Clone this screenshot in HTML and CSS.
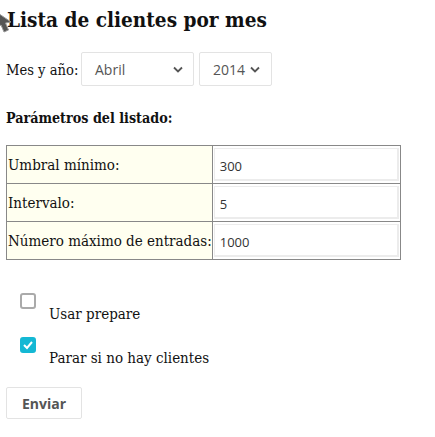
FILE: index.html
```html
<!DOCTYPE html>
<html lang="es">
<head>
<meta charset="utf-8">
<title>Lista de clientes por mes</title>
<link rel="stylesheet" href="styles.css">
</head>
<body>
<svg class="cursor" width="12" height="24" viewBox="0 0 12 24"><path d="M-8 0 L11 13 L5.5 14 L8.5 21 L4 23 L1 16 L-8 22 Z" fill="#555" stroke="#999" stroke-width="1"/></svg>
<h1 class="title">Lista de clientes por mes</h1>
<div class="period">
  <span class="period-label">Mes y año:</span>
  <div class="select month"><span>Abril</span><svg class="chev" width="10" height="7" viewBox="0 0 10 7"><path d="M1 1.5 L5 5.5 L9 1.5" fill="none" stroke="#555" stroke-width="1.8"/></svg></div>
  <div class="select year"><span>2014</span><svg class="chev" width="10" height="7" viewBox="0 0 10 7"><path d="M1 1.5 L5 5.5 L9 1.5" fill="none" stroke="#555" stroke-width="1.8"/></svg></div>
</div>
<h2 class="subtitle">Parámetros del listado:</h2>
<table class="params">
  <tr><td class="lbl">Umbral mínimo:</td><td class="val"><div class="input">300</div></td></tr>
  <tr><td class="lbl">Intervalo:</td><td class="val"><div class="input">5</div></td></tr>
  <tr><td class="lbl">Número máximo de entradas:</td><td class="val"><div class="input">1000</div></td></tr>
</table>
<div class="checks">
  <div class="check">
    <span class="box"></span>
    <span class="check-label">Usar prepare</span>
  </div>
  <div class="check">
    <span class="box checked"><svg width="12" height="10" viewBox="0 0 12 10"><path d="M2 5 L5 8 L10 2" fill="none" stroke="#fff" stroke-width="2"/></svg></span>
    <span class="check-label">Parar si no hay clientes</span>
  </div>
</div>
<div class="btn">Enviar</div>
</body>
</html>
```
FILE: styles.css
```css
html, body { margin: 0; padding: 0; background: #fff; }
body {
  font-family: "DejaVu Serif Condensed", "DejaVu Serif", "Liberation Serif", serif;
  color: #111;
  padding: 0 6px;
  position: relative;
}
.cursor { position: absolute; left: 0; top: 9px; }
.title {
  margin: 0;
  padding-top: 6px;
  font-size: 20.6px;
  line-height: 28px;
  font-weight: bold;
  padding-left: 1px;
}
.period {
  display: flex;
  align-items: center;
  margin-top: 18px;
  height: 34px;
}
.period-label { font-size: 14.6px; width: 75px; white-space: nowrap; }
.select {
  box-sizing: border-box;
  height: 34px;
  border: 1px solid #e3e3e3;
  border-radius: 2px;
  display: flex;
  align-items: center;
  font-family: "Open Sans", sans-serif;
  font-size: 14px;
  color: #555;
}
.select.month { width: 113px; padding: 0 10px 0 13px; justify-content: space-between; }
.select.year { width: 73px; margin-left: 5px; padding-left: 13px; gap: 5px; }
.subtitle {
  margin: 22px 0 0;
  font-size: 14.2px;
  line-height: 20px;
  font-weight: bold;
}
.params {
  margin-top: 17px;
  border-collapse: collapse;
  border: 1px solid #888;
  width: 395px;
}
.params td { border: 1px solid #888; padding: 0; }
.params .lbl { background: #fffff0; width: 202px; font-size: 15px; padding-left: 1px; white-space: nowrap; }
.params .val { padding: 2px 1px; }
.input {
  box-sizing: border-box;
  height: 33px;
  border: 1px solid #ececec;
  border-right-width: 2px;
  border-bottom-width: 2px;
  font-family: "Open Sans", sans-serif;
  font-size: 13px;
  color: #333;
  display: flex;
  align-items: center;
  padding-left: 5px;
  padding-top: 4px;
}
.checks { margin-top: 33px; padding-left: 14px; }
.check { display: flex; flex-direction: column; margin-bottom: 13px; }
.box {
  box-sizing: border-box;
  width: 16px; height: 16px;
  border: 2px solid #aaa;
  border-radius: 3px;
  display: flex; align-items: center; justify-content: center;
}
.box.checked { background: #14b8d4; border-color: #14b8d4; }
.check-label { font-size: 15px; padding-left: 29px; margin-top: -5px; line-height: 20px; }
.btn {
  box-sizing: border-box;
  width: 76px; height: 32px;
  margin-top: 19px;
  border: 1px solid #e3e3e3;
  border-radius: 2px;
  display: flex; align-items: center; justify-content: center;
  font-family: "Open Sans", sans-serif;
  font-weight: bold;
  font-size: 14px;
  color: #555;
}
```
